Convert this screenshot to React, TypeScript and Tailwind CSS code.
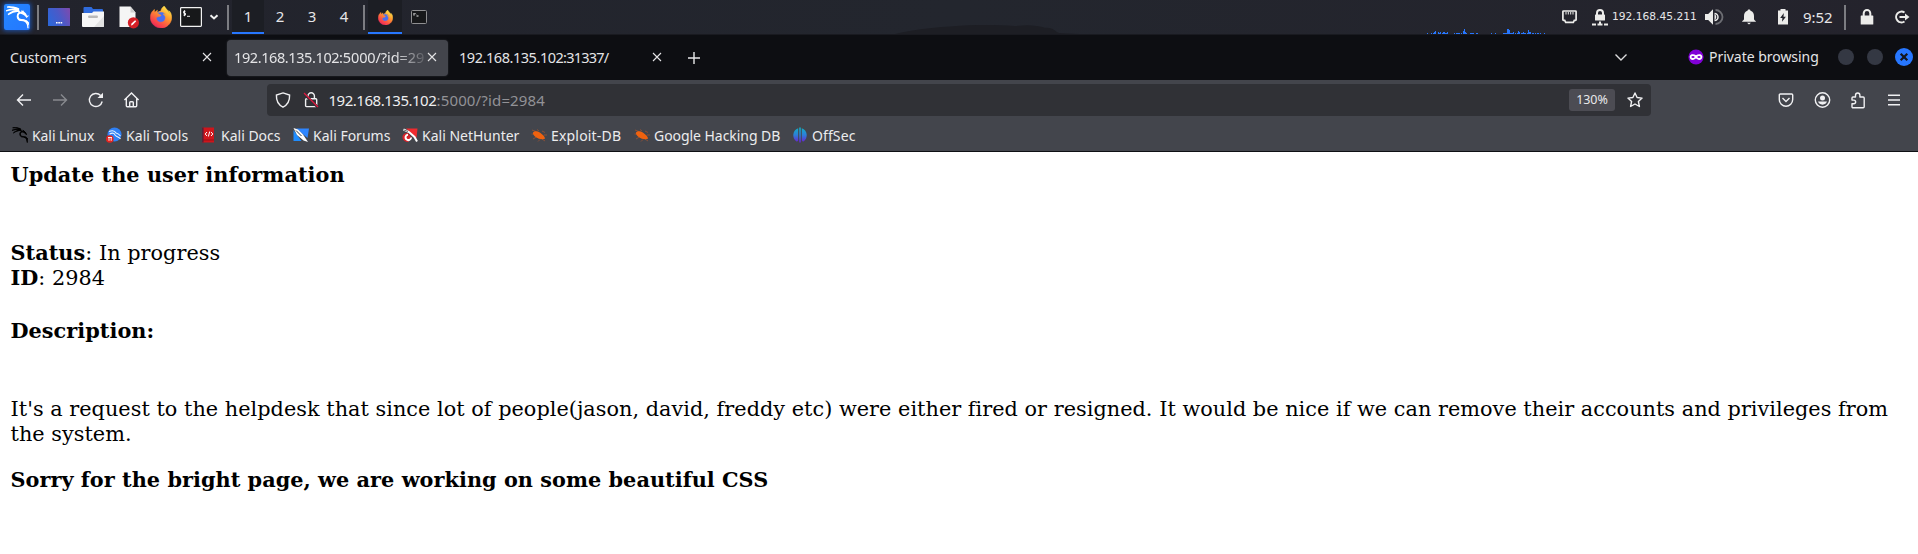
import React from "react";
import { SiKalilinux, SiFirefoxbrowser } from "react-icons/si";

type Kids = { children?: React.ReactNode; className?: string };

const Divider = ({ className = "" }: Kids) => (
  <span className={"h-[25px] w-[2px] shrink-0 bg-[#7c7d82] " + className} />
);

const Dragon = ({ size, className = "" }: { size: number; className?: string }) => (
  <SiKalilinux
    size={size}
    className={className}
    viewBox="0 2.3 24 19.2"
    preserveAspectRatio="none"
    stroke="currentColor"
    strokeWidth={1.2}
  />
);

const FirefoxIcon = ({ size, id }: { size: number; id: string }) => (
  <svg width={size} height={size} viewBox="0 0 24 24">
    <defs>
      <linearGradient id={id} x1="0.85" y1="0" x2="0.2" y2="1">
        <stop offset="0.1" stopColor="#ffe14a" />
        <stop offset="0.4" stopColor="#ff9a2e" />
        <stop offset="0.75" stopColor="#fb4a48" />
        <stop offset="1" stopColor="#e8205e" />
      </linearGradient>
    </defs>
    <circle cx="11.6" cy="12.4" r="7" fill="#4a6ff0" />
    <SiFirefoxbrowser size={24} fill={`url(#${id})`} stroke={`url(#${id})`} strokeWidth={0.6} />
  </svg>
);

const GRAPH: [number, number][] = [
  [0, 1], [4, 1], [6, 1], [7, 2], [8, 3], [11, 2], [12, 1], [13, 2], [15, 1], [16, 2], [17, 2], [18, 1], [19, 1], [20, 2],
  [27, 1], [29, 1], [30, 1], [31, 1], [32, 1], [34, 1], [36, 3], [37, 5], [38, 2], [39, 1], [43, 1], [44, 1], [45, 1], [46, 1],
  [49, 1], [50, 1], [64, 1], [68, 1], [76, 1], [77, 1], [78, 1], [79, 1], [80, 5], [81, 5], [82, 4], [83, 1], [84, 1], [85, 1],
  [86, 2], [88, 1], [90, 1], [91, 3], [92, 2], [94, 1], [95, 1], [96, 2], [97, 1], [98, 1], [100, 1], [101, 4], [102, 2],
  [103, 2], [105, 1], [106, 1], [108, 1], [110, 1], [111, 1], [113, 1], [117, 1],
];

const Panel = () => (
  <header className="flex h-[35px] items-center border-b border-[#191a20] bg-linear-to-r from-[#22232c] via-[#23262e] to-[#24232c] text-[15px] leading-none text-[#e6e6e8]">
    <div className="ml-[4px] flex size-[26px] shrink-0 items-center justify-center rounded-[2px] bg-linear-to-br from-[#2486ff] to-[#2477ff] text-white shadow-[0_0_4px_1px_#1c50a8]">
      <Dragon size={23} />
    </div>
    <Divider className="ml-[7px]" />
    <svg className="ml-[9px] shrink-0" width="22" height="18" viewBox="0 0 22 18">
      <defs>
        <linearGradient id="desk" x1="0" y1="0.6" x2="1" y2="0.2">
          <stop offset="0" stopColor="#2f66d8" />
          <stop offset="0.5" stopColor="#4a5ac8" />
          <stop offset="1" stopColor="#7a4bb0" />
        </linearGradient>
      </defs>
      <rect width="22" height="18" rx="0.6" fill="url(#desk)" />
      <path d="M8 14h1.6v1.6H8zM10.3 14h1.6v1.6h-1.6zM12.6 14h1.6v1.6h-1.6z" fill="#fff" />
    </svg>
    <svg className="ml-[12px] shrink-0" width="22" height="20" viewBox="0 0 22 20">
      <path d="M1.5 1a1 1 0 0 1 1-1h7l1.5 2h9a1 1 0 0 1 1 1v5h-19.5z" fill="#2f6bdc" />
      <path d="M0 6h10l1.5-1.5H22V19a1 1 0 0 1-1 1H1a1 1 0 0 1-1-1z" fill="#f6f6f6" />
      <path d="M22 9v10a1 1 0 0 1-1 1h-9z" fill="#e2e2e2" />
      <rect x="6" y="8.6" width="10" height="2.4" rx="1.2" fill="#b9b9b9" />
    </svg>
    <svg className="ml-[14px] shrink-0" width="22" height="23" viewBox="0 0 22 23">
      <path d="M1.5 0.5h11l5 6v14.5h-16z" fill="#f5f5f5" />
      <path d="M12.5 0.5l5 6h-5z" fill="#cfcfcf" />
      <circle cx="15.4" cy="16.8" r="5.6" fill="#d51f26" />
      <path d="M13 19.4l.5-1.8 3.6-3.4 1.1 1.1-3.6 3.6z" fill="#fff" />
    </svg>
    <span className="ml-[10px] shrink-0"><FirefoxIcon size={22} id="ff1" /></span>
    <svg className="ml-[8px] shrink-0" width="22" height="20" viewBox="0 0 22 20">
      <rect x="0.6" y="0.6" width="20.8" height="18.8" rx="0.8" fill="#17181a" stroke="#f2f2f2" strokeWidth="1.2" />
      <path d="M5.5 4.3H3.6v1.9h1.9v1.9H3.4M4.5 3.2v6M7 9.3h3" fill="none" stroke="#fff" strokeWidth="0.9" />
    </svg>
    <svg className="ml-[7px] shrink-0" width="10" height="8" viewBox="0 0 10 8">
      <path d="M1.5 2.2L5 5.5 8.5 2.2" fill="none" stroke="#f0f0f0" strokeWidth="2" />
    </svg>
    <Divider className="ml-[8px]" />
    <div className="ml-[3px] flex h-[34px] shrink-0">
      <span className="flex w-8 justify-center border-b-2 border-[#2777ff] bg-[#1c1e24] pt-[9px]">1</span>
      <span className="flex w-8 justify-center pt-[9px]">2</span>
      <span className="flex w-8 justify-center pt-[9px]">3</span>
      <span className="flex w-8 justify-center pt-[9px]">4</span>
    </div>
    <Divider className="ml-[3px]" />
    <div className="ml-[3px] flex h-[34px] w-[34px] shrink-0 items-center justify-center border-b-2 border-[#2777ff] bg-[#1c1e24] pt-[2px]">
      <FirefoxIcon size={15} id="ff2" />
    </div>
    <svg className="ml-[9px] shrink-0" width="16" height="14" viewBox="0 0 16 14">
      <rect x="0.5" y="0.5" width="15" height="13" rx="1" fill="#17181a" stroke="#8f8f91" />
      <path d="M3 3v2.6M4 3.3l1 1M5.5 6h2" fill="none" stroke="#f0f0f0" strokeWidth="1" />
    </svg>
    <svg className="ml-[468px] h-[34px] w-[190px] shrink-0" viewBox="0 0 190 34">
      <path d="M0 34C18 30 32 28 55 26.5 80 24.5 100 24.8 120 26c12-1.500 22-1 30 1.800 7-.8 9 2.500 14 5.200l20 1z" fill="#1d1e24" />
    </svg>
    <svg className="ml-[342px] h-[34px] w-[118px] shrink-0" viewBox="0 0 118 34" shapeRendering="crispEdges">
      {GRAPH.map(([x, h]) => (
        <rect key={x} x={x} y={34 - h} width="1" height={h} fill="#2777ff" />
      ))}
    </svg>
    <svg className="ml-[17px] shrink-0" width="15" height="14" viewBox="0 0 15 14">
      <path d="M1.5 1h12a.6.6 0 0 1 .6.6v8.2a.6.6 0 0 1-.6.6h-1.2l-1 2H3.700l-1-2H1.500a.6.6 0 0 1-.6-.6V1.600A.6.6 0 0 1 1.500 1z" fill="none" stroke="#ececea" strokeWidth="1.7" />
      <path d="M4 2v2.500M6.300 2v2.500M8.700 2v2.500M11 2v2.500" stroke="#ececea" strokeWidth="1" />
    </svg>
    <svg className="ml-[15px] shrink-0" width="16" height="17" viewBox="0 0 16 17">
      <path d="M5 6V4a3 3 0 0 1 6 0v2" fill="none" stroke="#ececea" strokeWidth="2" />
      <rect x="3" y="5.500" width="10" height="6" rx="0.600" fill="#ececea" />
      <path d="M0 15.500h4M5.500 15.500h5M12 15.500h4M8 12.500v3" stroke="#ececea" strokeWidth="2" />
    </svg>
    <span className="ml-[4px] w-[85px] shrink-0 whitespace-nowrap font-['DejaVu_Sans',sans-serif] text-[10.67px]">192.168.45.211</span>
    <svg className="ml-[7px] shrink-0" width="20" height="16" viewBox="0 0 20 16">
      <path d="M1 5h3.200L9 0.300v15.400L4.200 11H1z" fill="#ececea" />
      <path d="M10.500 5v6a3.400 3.400 0 0 0 0-6z" fill="#ececea" />
      <path d="M10.500 4.500a3.500 3.500 0 0 1 0 7" fill="none" stroke="#ececea" strokeWidth="1.500" />
      <path d="M11.500 1a7 7 0 0 1 0 14" fill="none" stroke="#6d6e73" strokeWidth="1.800" />
    </svg>
    <svg className="ml-[17px] shrink-0" width="16" height="16" viewBox="0 0 16 16">
      <path d="M8 0.500c.9 0 1.400.5 1.500 1.200C12 2.400 13 4.500 13 7v3.200c0 .8 1.800 1.400 2 2.600H1c.2-1.200 2-1.800 2-2.600V7c0-2.500 1-4.600 3.500-5.300C6.600 1 7.100.5 8 .5zM6 13.800h4L8 15.400z" fill="#ececea" />
    </svg>
    <svg className="ml-[20px] shrink-0" width="12" height="16" viewBox="0 0 12 16">
      <path d="M3.500 1V0h5v1.500H11v14H1v-14h2.500z" fill="#ececea" />
      <path d="M6.800 4L3.200 9h2.200l-.4 3.800L8.900 7.700H6.500z" fill="#22232b" />
    </svg>
    <span className="ml-[14px] w-[31px] shrink-0 whitespace-nowrap tracking-[-0.1px]">9:52</span>
    <Divider className="ml-[10px]" />
    <svg className="ml-[14px] shrink-0" width="14" height="16" viewBox="0 0 14 16">
      <path d="M3.700 8V4.300a3.300 3.300 0 0 1 6.600 0V8" fill="none" stroke="#ececea" strokeWidth="2" />
      <rect x="0.700" y="6.500" width="12.600" height="9" rx="0.600" fill="#ececea" />
    </svg>
    <svg className="ml-[20px] shrink-0" width="16" height="14" viewBox="0 0 16 14">
      <path d="M10.500 2.500A5.400 5.400 0 1 0 10.500 11.500" fill="none" stroke="#ececea" strokeWidth="2" />
      <path d="M5.500 7h7" stroke="#ececea" strokeWidth="2" />
      <path d="M11 3.500L15.500 7 11 10.500z" fill="#ececea" />
    </svg>
  </header>
);

const Close = ({ className = "" }: Kids) => (
  <svg className={"shrink-0 " + className} width="10" height="10" viewBox="0 0 10 10">
    <path d="M1 1l8 8M9 1L1 9" stroke="#e4e4e6" strokeWidth="1.1" />
  </svg>
);

const Tabs = () => (
  <nav className="flex h-[45px] items-center bg-[#0d0e12] text-[#e4e4e6]">
    <span className="ml-[10px] w-[192px] shrink-0 tracking-[0.1px]">Custom-ers</span>
    <Close className="mb-px" />
    <div className="ml-[15px] flex h-9 w-[221px] shrink-0 items-center rounded-[4px] bg-[#43454c] pl-[7px] shadow-[0_0_2px_#34363c]">
      <span className="flex w-[190px] overflow-hidden whitespace-nowrap [mask-image:linear-gradient(to_right,#000_160px,transparent_196px)]">
        <span className="w-[105px] shrink-0 text-[14.5px] tracking-[-0.4px]">192.168.135.102</span>
        <span className="shrink-0 text-[14.5px] tracking-[-0.1px]">:5000/?id=29</span>
      </span>
      <Close className="ml-[3px] mb-px" />
    </div>
    <span className="ml-[11px] flex w-[193px] shrink-0 whitespace-nowrap text-[14.5px]">
      <span className="w-[104px] shrink-0 tracking-[-0.45px]">192.168.135.102</span>
      <span className="tracking-[-0.75px]">:31337/</span>
    </span>
    <Close className="mb-px" />
    <svg className="ml-[25px] shrink-0" width="14" height="14" viewBox="0 0 14 14">
      <path d="M7 1v12M1 7h12" stroke="#e8e8ea" strokeWidth="1.400" />
    </svg>
    <svg className="ml-[913px] shrink-0" width="14" height="9" viewBox="0 0 14 9">
      <path d="M1.500 1.500L7 7l5.500-5.500" fill="none" stroke="#dcdcde" strokeWidth="1.400" />
    </svg>
    <svg className="ml-[60px] mb-px shrink-0" width="16" height="16" viewBox="0 0 16 16">
      <circle cx="8" cy="8" r="7.600" fill="#8000d7" />
      <path d="M1.700 7.300C2.200 5 5.700 4.700 8 6.300c2.300-1.600 5.800-1.300 6.300 1C14.600 9.500 13 11 11.300 11 9.600 11 9 9.600 8 9.600S6.400 11 4.700 11C3 11 1.400 9.500 1.700 7.300z" fill="#fff" />
      <ellipse cx="5" cy="8" rx="1.600" ry="1" fill="#8000d7" />
      <ellipse cx="11" cy="8" rx="1.600" ry="1" fill="#8000d7" />
    </svg>
    <span className="ml-[5px] mb-[2px] w-[129px] shrink-0 whitespace-nowrap tracking-[-0.03px]">Private browsing</span>
    <span className="mb-px size-4 shrink-0 rounded-full bg-[#343843]" />
    <span className="mb-px ml-[13px] size-4 shrink-0 rounded-full bg-[#343843]" />
    <svg className="mb-px ml-[12px] shrink-0" width="18" height="18" viewBox="0 0 18 18">
      <circle cx="9" cy="9" r="9" fill="#2777ff" />
      <path d="M5.700 5.700l6.600 6.600M12.300 5.700l-6.600 6.600" stroke="#15161c" strokeWidth="2.200" />
    </svg>
  </nav>
);

const line = "fill-none stroke-[#f0f0f2] stroke-[1.4]";

const NavBar = () => (
  <div className="flex h-10 items-center bg-[#43454c]">
    <svg className="ml-[16px] shrink-0" width="16" height="16" viewBox="0 0 16 16">
      <path className={line} d="M15 8H1.500M7 2.500L1.500 8 7 13.500" />
    </svg>
    <svg className="ml-[20px] shrink-0 opacity-40" width="16" height="16" viewBox="0 0 16 16">
      <path className={line} d="M1 8h13.500M9 2.500L14.500 8 9 13.500" />
    </svg>
    <svg className="ml-[20px] shrink-0" width="16" height="16" viewBox="0 0 16 16">
      <path className={line} d="M14.200 9.500A6.500 6.500 0 1 1 12.600 3.500" />
      <path d="M15 0.800V6H9.500z" fill="#f0f0f2" />
    </svg>
    <svg className="ml-[19px] shrink-0" width="17" height="16" viewBox="0 0 16 16">
      <path className={line} d="M0.900 8L8 1l7.100 7M2.800 6.500v7.200c0 .6.400 1 1 1h8.400c.6 0 1-.4 1-1V6.500M6.200 14.500v-4c0-.5.300-.8.800-.8h2c.5 0 .8.300.8.800v4" />
    </svg>
    <div className="ml-[127px] flex h-8 w-[1384px] shrink-0 items-center rounded-[4px] bg-[#303136]">
      <svg className="ml-[8px] shrink-0" width="16" height="16" viewBox="0 0 16 16">
        <path className={line} d="M8 0.900L14.600 3c.2 5.200-1.400 9.600-6.600 12.100C2.800 12.600 1.200 8.200 1.400 3z" />
      </svg>
      <svg className="ml-[12px] shrink-0" width="16" height="16" viewBox="0 0 16 16">
        <path className={line} d="M5 6.500V4a3.200 3.200 0 0 1 6.400 0v2.500M3.500 6.800h9.300c.5 0 .9.400.9.900v6c0 .5-.4.900-.9.900H3.500c-.5 0-.9-.4-.9-.9v-6c0-.5.400-.9.900-.9z" />
        <path d="M0.500 1.500l14.500 14" stroke="#303136" strokeWidth="2.600" />
        <path d="M1 1l14 14" stroke="#e2173f" strokeWidth="1.300" />
      </svg>
      <span className="ml-[9.5px] w-[108px] shrink-0 whitespace-nowrap text-[15px] tracking-[-0.48px] text-[#eeeef0]">192.168.135.102</span>
      <span className="w-[1132.5px] shrink-0 whitespace-nowrap text-[15px] tracking-[0.15px] text-[#929296]">:5000/?id=2984</span>
      <span className="flex h-[22px] w-[46px] shrink-0 items-center justify-center rounded-[3px] bg-[#4c4c53] text-[12.5px] tracking-[-0.1px] text-[#e8e8ea]">130%</span>
      <svg className="ml-[12px] shrink-0" width="16" height="16" viewBox="0 0 16 16">
        <path className={line} strokeLinejoin="round" d="M8 1l2.100 4.500 5 .6-3.700 3.400 1 5L8 12l-4.400 2.500 1-5L0.900 6.100l5-.6z" />
      </svg>
    </div>
    <svg className="ml-[127px] shrink-0" width="16" height="16" viewBox="0 0 16 16">
      <path className={line} d="M2.300 2h11.400c.6 0 1 .4 1 1v4.500a6.700 6.700 0 0 1-13.400 0V3c0-.6.400-1 1-1z" />
      <path className={line} d="M4.500 6L8 9.400 11.500 6" />
    </svg>
    <svg className="ml-[20px] shrink-0" width="17" height="16" viewBox="0 0 17 16">
      <circle className={line} cx="8.500" cy="8" r="7.200" />
      <circle cx="8.500" cy="5.900" r="2.500" fill="#f0f0f2" />
      <path d="M4 9.600h9a4.700 4.300 0 0 1-9 0z" fill="#f0f0f2" />
    </svg>
    <svg className="ml-[19px] shrink-0" width="16" height="17" viewBox="0 0 16 17">
      <path className={line} strokeLinejoin="round" d="M5.500 5V3.200a2.200 2.200 0 0 1 4.400 0V5h3.300c.6 0 1 .4 1 1v8.800c0 .5-.4 1-1 1H3c-.6 0-1-.5-1-1v-3h1.800a1.800 1.800 0 0 0 0-3.700H2V6c0-.6.400-1 1-1z" />
    </svg>
    <svg className="mb-px ml-[22px] shrink-0" width="12" height="12" viewBox="0 0 12 12">
      <path className={line} d="M0 1.300h12M0 6h12M0 10.700h12" />
    </svg>
  </div>
);

const Bug = () => (
  <svg width="16" height="16" viewBox="0 0 16 16">
    <path d="M1 3l4 1.500M0.500 7h4M2 12l3.500-2M6 2.500l2 1.500M11 4l3 1.500M13 8h3M7 14.500l2-2M14 14l-3-2" stroke="#a8552f" strokeWidth="0.700" />
    <path d="M2 5.500C3.500 3.500 7 4 9.500 6s4.500 3.500 4.500 5.800c-3 .8-6.500.3-9-1.500S1.800 7 2 5.500z" fill="#f0620f" />
  </svg>
);

const Bookmark = ({ icon, w, className, children }: { icon: React.ReactNode; w: string; className: string; children: React.ReactNode }) => (
  <a className={"flex shrink-0 items-center whitespace-nowrap " + className}>
    <span className="mr-[4px] size-4 shrink-0">{icon}</span>
    <span className={w}>{children}</span>
  </a>
);

const Bookmarks = () => (
  <div className="flex h-8 items-center border-b border-[#0e0f13] bg-[#43454c] pb-px text-[#ececee]">
    <Bookmark className="ml-[12px]" w="w-[62px] tracking-[-0.08px]" icon={<Dragon size={16} className="text-black" />}>Kali Linux</Bookmark>
    <Bookmark
      className="ml-[12px]"
      w="w-[62px] tracking-[0.08px]"
      icon={
        <svg width="16" height="16" viewBox="0 0 16 16">
          <circle cx="8.500" cy="7.500" r="7" fill="#2f80f5" />
          <path d="M3 4.500c4-1.500 6-.5 7 1.500 2 .5 3 1 4.500 3M3.500 7c3-1.500 5-1 5.500 1 2 2.500 4 1.500 5.500 4" fill="none" stroke="#e8f2ff" strokeWidth="1.100" />
          <circle cx="3.800" cy="12" r="3.800" fill="#e2231f" />
          <path d="M2 10.500h4M3 10.500v3.300M5.200 10.500v3.300" stroke="#fff" strokeWidth="0.900" />
        </svg>
      }
    >
      Kali Tools
    </Bookmark>
    <Bookmark
      className="ml-[13px]"
      w="w-[60px]"
      icon={
        <svg width="16" height="16" viewBox="0 0 16 16">
          <rect x="1" y="0.500" width="12" height="15" fill="#cf151b" />
          <rect x="1" y="0.500" width="1.600" height="15" fill="#5a2238" />
          <path d="M2 13h11" stroke="#8a0f14" strokeWidth="0.800" />
          <path d="M6 5L4.200 7 6 9M10 5l1.800 2L10 9M8.700 4.500L7.400 9.500" fill="none" stroke="#fff" strokeWidth="1" />
        </svg>
      }
    >
      Kali Docs
    </Bookmark>
    <Bookmark
      className="ml-[12px]"
      w="w-[77px]"
      icon={
        <svg width="16" height="16" viewBox="0 0 16 16">
          <path d="M3 1.500h13L14.500 11z" fill="#2f86ff" />
          <path d="M0.500 14V3l8 11z" fill="#1f8dff" />
          <path d="M0.500 1l4.500 1.500 5 5 5 7.500-4.500-1.500L4 8z" fill="#fff" />
          <path d="M3 3.500l5.500 5.500" stroke="#333" strokeWidth="1" />
        </svg>
      }
    >
      Kali Forums
    </Bookmark>
    <Bookmark
      className="ml-[12px]"
      w="w-[97px]"
      icon={
        <svg width="16" height="16" viewBox="0 0 16 16">
          <path d="M4 1.500h11.500L14.500 11z" fill="#ef2b2f" />
          <path d="M0.500 9c1-2.500 4-3.500 6-2.500l3 4.500-3.500 4C2.500 15 0 12.500.5 9z" fill="#d8232a" />
          <path d="M1.500 2.500L7 5l5.500 5 2.500 4.500M6 7.800C3.500 8 2.800 10.500 4.300 12.300c2 1.700 5 .5 4.700-1.800" fill="none" stroke="#fff" strokeWidth="2" />
          <path d="M2 3l4 1.500" stroke="#444" strokeWidth="0.800" />
        </svg>
      }
    >
      Kali NetHunter
    </Bookmark>
    <Bookmark className="ml-[12px]" w="w-[71px] tracking-[0.18px]" icon={<Bug />}>Exploit-DB</Bookmark>
    <Bookmark className="ml-[12px]" w="w-[126px] tracking-[-0.05px]" icon={<Bug />}>Google Hacking DB</Bookmark>
    <Bookmark
      className="ml-[12px]"
      w="w-[45px] tracking-[0.1px]"
      icon={
        <svg width="16" height="16" viewBox="0 0 16 16">
          <defs>
            <linearGradient id="off" x1="0" y1="0" x2="0" y2="1">
              <stop offset="0" stopColor="#10b0c4" />
              <stop offset="0.500" stopColor="#2d7fd8" />
              <stop offset="1" stopColor="#6a1fd0" />
            </linearGradient>
          </defs>
          <path d="M6.200 1.200v12C5.800 14 5 14.600 4.500 14.400A7.500 7.500 0 0 1 6.200 1.200zM9.800 1.200v12c.4.800 1.200 1.400 1.700 1.200A7.500 7.500 0 0 0 9.800 1.200zM7.200 0.500h1.600v15H7.200z" fill="url(#off)" />
        </svg>
      }
    >
      OffSec
    </Bookmark>
  </div>
);

const Page = () => (
  <main className="flex flex-col bg-white pt-[10px] pl-[10.5px] font-['DejaVu_Serif',serif] text-[20.8px] leading-[25px] text-black">
    <h4 className="font-bold tracking-[0.04px]">Update the user information</h4>
    <p className="mt-[54px] h-[25px] tracking-[0.03px]"><b className="leading-none">Status</b>: In progress</p>
    <p className="h-[25px] tracking-[0.03px]"><b className="leading-none">ID</b>: 2984</p>
    <h4 className="mt-[27px] font-bold tracking-[0.04px]">Description:</h4>
    <p className="mt-[54px] w-[1895px] tracking-[0.03px]">
      It's a request to the helpdesk that since lot of people(jason, david, freddy etc) were either fired or resigned. It would be nice if we can remove their accounts and privileges from the system.
    </p>
    <h4 className="mt-[20px] font-bold tracking-[0.04px]">Sorry for the bright page, we are working on some beautiful CSS</h4>
  </main>
);

export default function App() {
  return (
    <div className="h-[554px] w-[1918px] overflow-hidden bg-white font-['Noto_Sans',sans-serif] text-[14px]">
      <Panel />
      <Tabs />
      <NavBar />
      <Bookmarks />
      <Page />
    </div>
  );
}
